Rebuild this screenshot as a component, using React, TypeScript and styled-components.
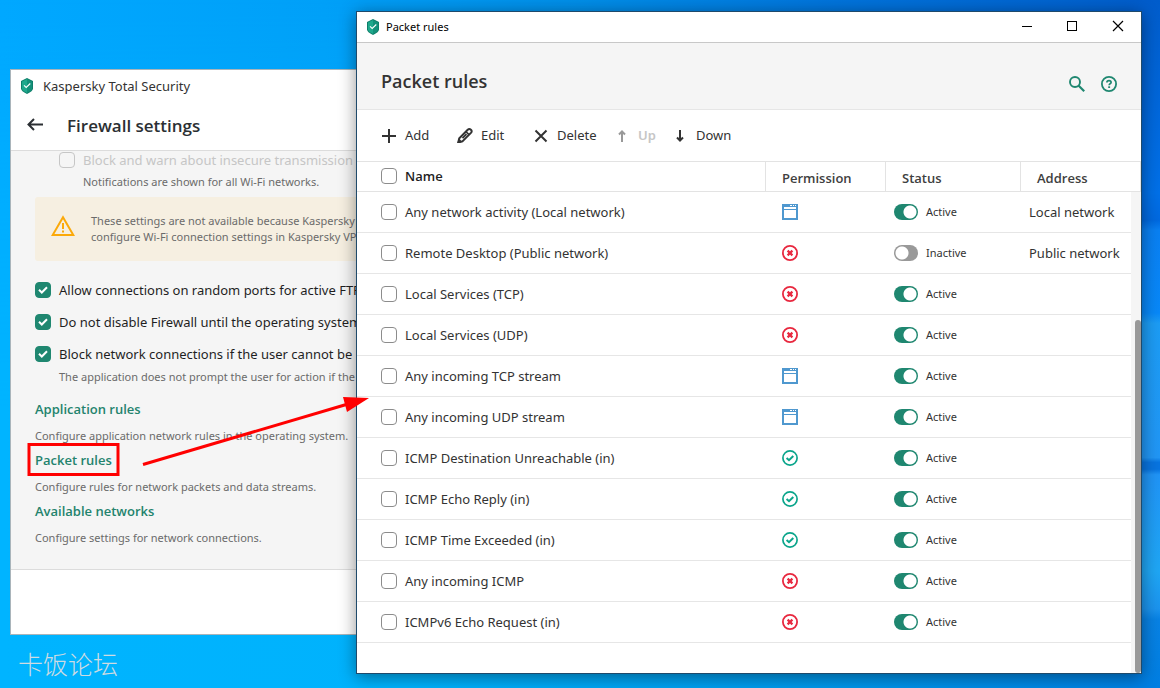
import React from "react";
import styled, { createGlobalStyle, css } from "styled-components";

const GlobalStyle = createGlobalStyle`
  *, *::before, *::after { box-sizing: border-box; }
  html, body { margin: 0; padding: 0; }
  body, button, input { font-family: "Noto Sans", "Open Sans", "Noto Sans CJK SC", sans-serif; }
  body { font-size: 13px; line-height: 20px; color: #333; }
`;

const headingFont = `"Open Sans", "Noto Sans", sans-serif`;

const Desktop = styled.main`
  position: relative;
  min-height: 100vh;
  overflow: hidden;
  background: #00a8ff;
`;

const Wallpaper = styled.svg`
  position: absolute;
  inset: 0;
  width: 100%;
  height: 100%;
`;

const windowBase = css`
  position: absolute;
  background: #fff;
`;

const SettingsWindow = styled.section`
  ${windowBase}
  left: 10px;
  top: 69px;
  width: 60%;
  border: 1px solid #a9b4ba;
  white-space: nowrap;
  overflow: hidden;
`;

const RulesWindow = styled.section`
  ${windowBase}
  left: 356px;
  right: 18px;
  top: 11px;
  border: 1px solid #1f4a6b;
  box-shadow: 0 3px 16px rgba(0, 0, 0, 0.42);
`;

const AppTitle = styled.div`
  display: flex;
  align-items: center;
  gap: 10px;
  height: 32px;
  padding-left: 10px;
`;

const SettingsHeader = styled.header`
  display: flex;
  align-items: center;
  gap: 24px;
  height: 49px;
  padding-left: 16px;
  border-bottom: 1px solid #dcdcdc;
`;

const SettingsHeading = styled.h1`
  margin: 0;
  font-family: ${headingFont};
  font-size: 17px;
  line-height: 24px;
  font-weight: 600;
  color: #2b2f33;
`;

const IconButton = styled.button`
  display: inline-flex;
  padding: 0;
  border: 0;
  background: none;
  color: inherit;
`;

const SettingsBody = styled.div`
  display: flow-root;
  height: 419px;
  padding-left: 24px;
  background: #f5f5f5;
  border-bottom: 1px solid #dcdcdc;
`;

const SettingsFooter = styled.footer`
  height: 64px;
`;

const CheckLabel = styled.label<{ $muted?: boolean }>`
  display: flex;
  align-items: center;
  gap: 8px;
  height: 20px;
  color: ${(p) => (p.$muted ? "#c6c6c6" : "#1f1f1f")};
`;

const Check = styled.input<{ $muted?: boolean }>`
  appearance: none;
  flex: none;
  display: block;
  width: 16px;
  height: 16px;
  margin: 0;
  border: 1px solid ${(p) => (p.$muted ? "#c6c6c6" : "#8c8c8c")};
  border-radius: 4px;
  background: transparent;
  &:checked {
    border-color: #1f8770;
    background: #1f8770;
  }
`;

const CheckBox = styled.span`
  position: relative;
  display: inline-flex;
  svg { position: absolute; inset: 0; pointer-events: none; }
`;

const Note = styled.p<{ $indent?: boolean }>`
  margin: 0;
  padding-left: ${(p) => (p.$indent ? "24px" : "0")};
  font-size: 11px;
  line-height: 16px;
  color: #6b6b6b;
`;

const InsecureGroup = styled.div`
  margin-top: -1px;
  padding-left: 24px;
  display: grid;
  gap: 4px;
`;

const Warning = styled.div`
  display: flex;
  align-items: center;
  gap: 16px;
  height: 64px;
  margin-top: 7px;
  padding-left: 16px;
  border-radius: 3px;
  background: #f6efe1;
  svg { margin-bottom: 6px; }
`;

const Options = styled.div`
  display: grid;
  gap: 12px;
  margin-top: 19px;
`;

const LastOption = styled.div`
  display: grid;
  gap: 5px;
`;

const LinkList = styled.div`
  display: grid;
  gap: 6px;
  margin-top: 14px;
`;

const LinkItem = styled.div`
  display: grid;
  gap: 9px;
`;

const SectionLink = styled.a`
  justify-self: start;
  font-family: ${headingFont};
  color: #23836d;
  font-weight: 600;
  text-decoration: none;
`;

const TitleBar = styled.div`
  display: flex;
  align-items: center;
  justify-content: space-between;
  height: 31px;
  padding: 0 17px 0 10px;
  border-bottom: 1px solid #c8c8c8;
  color: #000;
  font-size: 11px;
`;

const TitleGroup = styled.div`
  display: flex;
  align-items: center;
  gap: 7px;
`;

const WindowControls = styled.div`
  display: flex;
  gap: 34px;
  padding-bottom: 2px;
`;

const RulesHeader = styled.header`
  display: flex;
  align-items: center;
  justify-content: space-between;
  height: 67px;
  padding: 10px 24px 0;
  background: #f5f5f5;
  border-bottom: 1px solid #e6e6e6;
`;

const RulesHeading = styled.h2`
  margin: 0;
  font-family: ${headingFont};
  font-size: 18px;
  line-height: 24px;
  font-weight: 600;
  color: #333;
`;

const HeaderActions = styled.div`
  display: flex;
  gap: 16px;
  padding-top: 5px;
  color: #1f8770;
`;

const Toolbar = styled.div`
  display: grid;
  grid-template-columns: 76px 76px 81px 58px auto;
  justify-content: start;
  align-items: center;
  height: 51px;
  padding: 0 0 2px 24px;
`;

const ToolButton = styled.button`
  display: flex;
  align-items: center;
  gap: 8px;
  padding: 0;
  border: 0;
  background: none;
  color: #333;
  font-size: 13px;
  line-height: 20px;
  &:disabled { color: #c6c6c6; font-weight: 600; }
  &:disabled svg { color: #999; }
`;

const TableArea = styled.div`
  position: relative;
  padding-bottom: 30px;
`;

const Table = styled.table`
  width: 100%;
  table-layout: fixed;
  border-collapse: separate;
  border-spacing: 0;
`;

const Th = styled.th<{ $width?: number }>`
  width: ${(p) => (p.$width ? `${p.$width}px` : "auto")};
  height: 31px;
  padding: ${(p) => (p.$width ? "3px 0 0 16px" : "0 0 2px 24px")};
  border: solid #e3e3e3;
  border-width: 1px 1px 1px 0;
  text-align: left;
  font-family: ${headingFont};
  font-weight: 600;
  color: ${(p) => (p.$width ? "#404040" : "#1f1f1f")};
`;

const Td = styled.td<{ $pad: number }>`
  height: 41px;
  padding: 0 0 0 ${(p) => p.$pad}px;
  border-bottom: 1px solid #e6e6e6;
  white-space: nowrap;
  color: #333;
  svg { display: block; }
`;

const RowLabel = styled.label`
  display: flex;
  align-items: center;
  gap: 8px;
`;

const StatusLabel = styled.label`
  display: flex;
  align-items: center;
  gap: 8px;
  font-size: 11px;
  line-height: 16px;
`;

const Toggle = styled.input`
  appearance: none;
  flex: none;
  width: 24px;
  height: 16px;
  margin: 0;
  border-radius: 8px;
  background: radial-gradient(circle at 8px 8px, #fff 6px, transparent 7px) #999;
  &:checked {
    background: radial-gradient(circle at 16px 8px, #fff 6px, transparent 7px) #1f8770;
  }
`;

const ScrollTrack = styled.div`
  position: absolute;
  top: 31px;
  right: 0;
  bottom: 0;
  width: 10px;
  padding: 128px 0 0 4px;
  background: #f5f5f5;
`;

const ScrollThumb = styled.div`
  height: 100%;
  border-radius: 3px;
  background: #999;
`;

const Watermark = styled.div`
  position: absolute;
  left: 18px;
  top: 646px;
  font-family: "Noto Sans CJK SC", sans-serif;
  font-size: 25px;
  line-height: 34px;
  font-weight: 300;
  color: #cfdbe2;
`;

const Annotation = styled.svg`
  position: absolute;
  left: 0;
  top: 0;
  pointer-events: none;
`;

const Shield = () => (
  <svg width="12" height="16" viewBox="0 0 12 16" aria-hidden="true">
    <path d="M6 0 12 3V10.500Q12 13 6 16 0 13 0 10.500V3Z" fill="#0e7f6a" />
    <path d="M6 1 1 3.500V10.500Q1 12.500 6 15Z" fill="#1fa88c" />
    <path d="M6 1 11 3.500V10.500Q11 12.500 6 15Z" fill="#14917a" />
    <path d="M3 7.300 5.200 9.500 9.300 5.500" fill="none" stroke="#fff" strokeWidth="1.100" />
  </svg>
);

const Tick = () => (
  <svg width="16" height="16" viewBox="0 0 16 16" aria-hidden="true">
    <path d="M4 7.800 6.800 10.500 12 5.200" fill="none" stroke="#fff" strokeWidth="2" />
  </svg>
);

const BlockIcon = () => (
  <svg width="16" height="16" viewBox="0 0 16 16" role="img" aria-label="Blocked">
    <circle cx="8" cy="8" r="7.100" fill="none" stroke="#e8283f" strokeWidth="1.800" />
    <path d="M5.600 5.600 10.400 10.400M10.400 5.600 5.600 10.400" stroke="#e8283f" strokeWidth="2.200" />
  </svg>
);

const AllowIcon = () => (
  <svg width="16" height="16" viewBox="0 0 16 16" role="img" aria-label="Allowed">
    <circle cx="8" cy="8" r="7.100" fill="none" stroke="#0aa58b" strokeWidth="1.700" />
    <path d="M4.600 8 7 10.200 11.300 6" fill="none" stroke="#0aa58b" strokeWidth="2" />
  </svg>
);

const AppRulesIcon = () => (
  <svg width="16" height="16" viewBox="0 0 16 16" role="img" aria-label="By application rules" shapeRendering="crispEdges">
    <path
      fillRule="evenodd"
      fill="#4f98cf"
      d="M0 0H16V16H0ZM8 1V2H10V1ZM11 1V2H12V1ZM13 1V2H14V1ZM2 3V5H14V3ZM2 6V14H14V6Z"
    />
  </svg>
);

const permissionIcons = { app: AppRulesIcon, block: BlockIcon, allow: AllowIcon };

type Rule = {
  name: string;
  permission: keyof typeof permissionIcons;
  active: boolean;
  address?: string;
};

const rules: Rule[] = [
  { name: "Any network activity (Local network)", permission: "app", active: true, address: "Local network" },
  { name: "Remote Desktop (Public network)", permission: "block", active: false, address: "Public network" },
  { name: "Local Services (TCP)", permission: "block", active: true },
  { name: "Local Services (UDP)", permission: "block", active: true },
  { name: "Any incoming TCP stream", permission: "app", active: true },
  { name: "Any incoming UDP stream", permission: "app", active: true },
  { name: "ICMP Destination Unreachable (in)", permission: "allow", active: true },
  { name: "ICMP Echo Reply (in)", permission: "allow", active: true },
  { name: "ICMP Time Exceeded (in)", permission: "allow", active: true },
  { name: "Any incoming ICMP", permission: "block", active: true },
  { name: "ICMPv6 Echo Request (in)", permission: "block", active: true },
];

const links = [
  { title: "Application rules", note: "Configure application network rules in the operating system." },
  { title: "Packet rules", note: "Configure rules for network packets and data streams." },
  { title: "Available networks", note: "Configure settings for network connections." },
];

const CheckedOption = ({ children }: { children: React.ReactNode }) => (
  <CheckLabel>
    <CheckBox>
      <Check type="checkbox" defaultChecked />
      <Tick />
    </CheckBox>
    {children}
  </CheckLabel>
);

export default function App() {
  return (
    <Desktop>
      <GlobalStyle />
      <Wallpaper viewBox="0 0 1160 688" preserveAspectRatio="none" aria-hidden="true">
        <defs>
          <linearGradient id="sky" x1="0" x2="1" y1="0" y2="0">
            <stop offset="0" stopColor="#00a8ff" />
            <stop offset="0.280" stopColor="#00a0f8" />
            <stop offset="0.500" stopColor="#008ee8" />
            <stop offset="0.720" stopColor="#0074dc" />
            <stop offset="1" stopColor="#005ccb" />
          </linearGradient>
          <linearGradient id="floor" x1="0" x2="1" y1="0" y2="0">
            <stop offset="0" stopColor="#00b4ff" />
            <stop offset="0.350" stopColor="#00b2fc" />
            <stop offset="0.700" stopColor="#0098ea" />
            <stop offset="1" stopColor="#007fe2" />
          </linearGradient>
          <linearGradient id="fade" x1="0" x2="0" y1="0" y2="1">
            <stop offset="0" stopColor="#000" />
            <stop offset="0.600" stopColor="#fff" />
          </linearGradient>
          <mask id="floorMask">
            <rect width="1160" height="688" fill="url(#fade)" />
          </mask>
          <linearGradient id="side" x1="0" x2="0" y1="0" y2="1">
            <stop offset="0" stopColor="#005ccb" />
            <stop offset="0.280" stopColor="#0070e8" />
            <stop offset="0.320" stopColor="#0069e0" />
            <stop offset="0.335" stopColor="#0a80f2" />
            <stop offset="0.455" stopColor="#0888f8" />
            <stop offset="0.470" stopColor="#1c9cf4" />
            <stop offset="0.665" stopColor="#2196f5" />
            <stop offset="0.672" stopColor="#0874e0" />
            <stop offset="0.682" stopColor="#0874e0" />
            <stop offset="0.690" stopColor="#2094f6" />
            <stop offset="0.830" stopColor="#1fa6f4" />
            <stop offset="0.885" stopColor="#1b93ee" />
            <stop offset="0.900" stopColor="#0882e4" />
            <stop offset="1" stopColor="#007ee2" />
          </linearGradient>
        </defs>
        <rect width="1160" height="688" fill="url(#sky)" />
        <rect width="1160" height="688" fill="url(#floor)" mask="url(#floorMask)" />
        <rect x="1130" width="30" height="688" fill="url(#side)" />
      </Wallpaper>

      <SettingsWindow>
        <AppTitle>
          <Shield />
          <span>Kaspersky Total Security</span>
        </AppTitle>
        <SettingsHeader>
          <IconButton aria-label="Back">
            <svg width="16" height="16" viewBox="0 0 16 16">
              <path d="M16 6.500H1.500M7 1 1.500 6.500 7 12" fill="none" stroke="#2b2f33" strokeWidth="2" />
            </svg>
          </IconButton>
          <SettingsHeading>Firewall settings</SettingsHeading>
        </SettingsHeader>
        <SettingsBody>
          <InsecureGroup>
            <CheckLabel $muted>
              <Check type="checkbox" disabled $muted />
              Block and warn about insecure transmission
            </CheckLabel>
            <Note $indent>Notifications are shown for all Wi-Fi networks.</Note>
          </InsecureGroup>
          <Warning>
            <svg width="24" height="22" viewBox="0 0 24 22" aria-hidden="true">
              <path d="M12 2.200 22.300 20H1.700Z" fill="none" stroke="#fba90a" strokeWidth="2" />
              <path d="M12 8V14M12 15.500V17.500" stroke="#fba90a" strokeWidth="2" />
            </svg>
            <Note>
              These settings are not available because Kaspersky
              <br />
              configure Wi-Fi connection settings in Kaspersky VPN
            </Note>
          </Warning>
          <Options>
            <CheckedOption>Allow connections on random ports for active FTP mode</CheckedOption>
            <CheckedOption>Do not disable Firewall until the operating system</CheckedOption>
            <LastOption>
              <CheckedOption>Block network connections if the user cannot be</CheckedOption>
              <Note $indent>The application does not prompt the user for action if the</Note>
            </LastOption>
          </Options>
          <LinkList>
            {links.map((l) => (
              <LinkItem key={l.title}>
                <SectionLink href="#">{l.title}</SectionLink>
                <Note>{l.note}</Note>
              </LinkItem>
            ))}
          </LinkList>
        </SettingsBody>
        <SettingsFooter />
      </SettingsWindow>

      <RulesWindow>
        <TitleBar>
          <TitleGroup>
            <Shield />
            <span>Packet rules</span>
          </TitleGroup>
          <WindowControls>
            <IconButton aria-label="Minimize">
              <svg width="12" height="12" viewBox="0 0 12 12" shapeRendering="crispEdges">
                <path d="M2 6.500H12" stroke="#000" />
              </svg>
            </IconButton>
            <IconButton aria-label="Maximize">
              <svg width="12" height="12" viewBox="0 0 12 12" shapeRendering="crispEdges">
                <path d="M1.500 1.500H10.500V10.500H1.500Z" fill="none" stroke="#000" />
              </svg>
            </IconButton>
            <IconButton aria-label="Close">
              <svg width="12" height="12" viewBox="0 0 12 12">
                <path d="M1 1 11 11M11 1 1 11" stroke="#000" strokeWidth="1.200" />
              </svg>
            </IconButton>
          </WindowControls>
        </TitleBar>
        <RulesHeader>
          <RulesHeading>Packet rules</RulesHeading>
          <HeaderActions>
            <IconButton aria-label="Search">
              <svg width="16" height="16" viewBox="0 0 16 16">
                <circle cx="6" cy="6" r="5" fill="none" stroke="currentColor" strokeWidth="1.900" />
                <path d="M9.500 9.500 15.200 15.200" stroke="currentColor" strokeWidth="2.200" />
              </svg>
            </IconButton>
            <IconButton aria-label="Help">
              <svg width="16" height="16" viewBox="0 0 16 16">
                <circle cx="8" cy="8" r="7.100" fill="none" stroke="currentColor" strokeWidth="1.800" />
                <path d="M5.900 6.500C5.900 5.200 6.800 4.700 8 4.700S10.100 5.300 10.100 6.400C10.100 7.700 8.200 7.700 8.200 9.300" fill="none" stroke="currentColor" strokeWidth="1.700" />
                <path d="M7.200 10.300H9.100V12H7.200Z" fill="currentColor" />
              </svg>
            </IconButton>
          </HeaderActions>
        </RulesHeader>
        <Toolbar>
          <ToolButton>
            <svg width="16" height="16" viewBox="0 0 16 16"><path d="M1 9H15M8 2V16" stroke="currentColor" strokeWidth="2" /></svg>
            Add
          </ToolButton>
          <ToolButton>
            <svg width="16" height="16" viewBox="0 0 16 16">
              <path d="M1.200 15.500 2.300 11.200 10.700 2.700Q12.300 1.200 13.900 2.700T13.900 5.900L5.400 14.400Z" fill="none" stroke="currentColor" strokeWidth="2" />
              <path d="M8.800 4.500 12 7.700M5.500 11.100 9.500 7.100" fill="none" stroke="currentColor" strokeWidth="1.700" />
              <path d="M.500 16 1.800 11.200 5.400 14.700Z" fill="currentColor" />
            </svg>
            Edit
          </ToolButton>
          <ToolButton>
            <svg width="16" height="16" viewBox="0 0 16 16"><path d="M2.500 3.500 13.500 14.500M13.500 3.500 2.500 14.500" stroke="currentColor" strokeWidth="2" /></svg>
            Delete
          </ToolButton>
          <ToolButton disabled>
            <svg width="16" height="16" viewBox="0 0 16 16"><path d="M8 15V4M5 7.500 8 4.500 11 7.500" fill="none" stroke="currentColor" strokeWidth="2" /></svg>
            Up
          </ToolButton>
          <ToolButton>
            <svg width="16" height="16" viewBox="0 0 16 16"><path d="M8 3V14M5 10.500 8 13.500 11 10.500" fill="none" stroke="currentColor" strokeWidth="2" /></svg>
            Down
          </ToolButton>
        </Toolbar>
        <TableArea>
          <Table>
            <thead>
              <tr>
                <Th>
                  <RowLabel>
                    <Check type="checkbox" />
                    Name
                  </RowLabel>
                </Th>
                <Th $width={120}>Permission</Th>
                <Th $width={135}>Status</Th>
                <Th $width={120}>Address</Th>
              </tr>
            </thead>
            <tbody>
              {rules.map((r) => {
                const Icon = permissionIcons[r.permission];
                return (
                  <tr key={r.name}>
                    <Td $pad={24}>
                      <RowLabel>
                        <Check type="checkbox" />
                        {r.name}
                      </RowLabel>
                    </Td>
                    <Td $pad={16}><Icon /></Td>
                    <Td $pad={8}>
                      <StatusLabel>
                        <Toggle type="checkbox" role="switch" defaultChecked={r.active} />
                        {r.active ? "Active" : "Inactive"}
                      </StatusLabel>
                    </Td>
                    <Td $pad={8}>{r.address}</Td>
                  </tr>
                );
              })}
            </tbody>
          </Table>
          <ScrollTrack>
            <ScrollThumb />
          </ScrollTrack>
        </TableArea>
      </RulesWindow>

      <Watermark>卡饭论坛</Watermark>
      <Annotation width="380" height="490" viewBox="0 0 380 490" aria-hidden="true">
        <rect x="29" y="444.500" width="89" height="30" fill="none" stroke="#f00" strokeWidth="3" />
        <path d="M143 464.500 348 404" stroke="#f00" strokeWidth="3" />
        <path d="M343 397 369 398 347 412Z" fill="#f00" />
      </Annotation>
    </Desktop>
  );
}
